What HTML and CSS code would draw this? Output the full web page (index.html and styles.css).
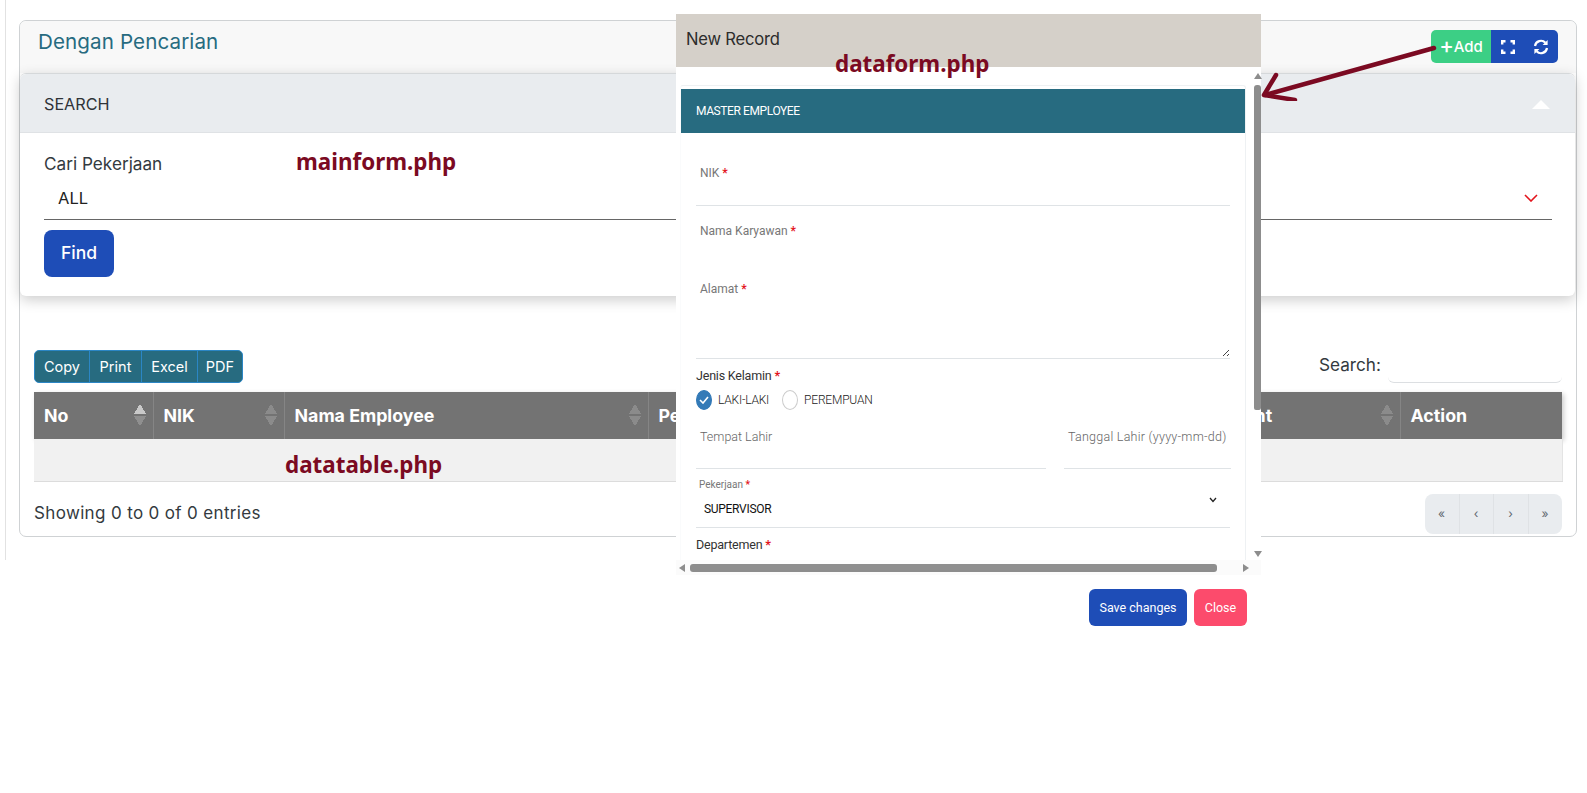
FILE: index.html
```html
<!DOCTYPE html>
<html lang="id">
<head>
<meta charset="utf-8">
<title>Dengan Pencarian</title>
<link rel="stylesheet" href="styles.css">
</head>
<body>
<div class="page">
  <section class="card">
    <header class="card-head">
      <h1 class="card-title">Dengan Pencarian</h1>
      <div class="tools">
        <button class="tool tool-add"><span class="plus">+</span>Add</button>
        <button class="tool tool-icon" aria-label="Fullscreen">
          <svg width="14" height="14" viewBox="0 0 14 14" fill="none" stroke="#fff" stroke-width="2.4"><path d="M1.2 4.5V1.2h3.3M9.5 1.2h3.3v3.3M12.8 9.5v3.3H9.5M4.5 12.8H1.2V9.5"/></svg>
        </button>
        <button class="tool tool-icon" aria-label="Refresh">
          <svg width="16" height="16" viewBox="0 0 16 16" fill="none" stroke="#fff" stroke-width="2.2"><path d="M2 7a6 6 0 0 1 10.4-3.2"/><path d="M14 9a6 6 0 0 1-10.4 3.2"/><path d="M14.6 1v5h-5z" fill="#fff" stroke="none"/><path d="M1.4 15v-5h5z" fill="#fff" stroke="none"/></svg>
        </button>
      </div>
    </header>

    <section class="search">
      <div class="search-head">
        <span>SEARCH</span>
        <span class="tri-up"></span>
      </div>
      <div class="search-body">
        <label class="search-label">Cari Pekerjaan</label>
        <div class="select">
          <span>ALL</span>
          <svg width="14" height="8" viewBox="0 0 14 8" fill="none" stroke="#e3141c" stroke-width="1.6"><path d="M1 1l6 6 6-6"/></svg>
        </div>
        <button class="find">Find</button>
      </div>
    </section>

    <div class="dt-top">
      <div class="dt-buttons">
        <button class="dt-btn b1">Copy</button>
        <button class="dt-btn b2">Print</button>
        <button class="dt-btn b3">Excel</button>
        <button class="dt-btn b4">PDF</button>
      </div>
      <div class="dt-search">
        <span>Search:</span>
        <span class="dt-input"></span>
      </div>
    </div>

    <table class="dt">
      <colgroup>
        <col class="c1"><col class="c2"><col class="c3"><col class="c4"><col class="c5"><col class="c6">
      </colgroup>
      <thead>
        <tr>
          <th><div class="th-in">No<span class="sort on"></span></div></th>
          <th><div class="th-in">NIK<span class="sort"></span></div></th>
          <th><div class="th-in">Nama Employee<span class="sort"></span></div></th>
          <th><div class="th-in">Pekerjaan<span class="sort"></span></div></th>
          <th><div class="th-in">Department<span class="sort"></span></div></th>
          <th><div class="th-in">Action</div></th>
        </tr>
      </thead>
      <tbody>
        <tr><td colspan="6"></td></tr>
      </tbody>
    </table>

    <div class="dt-bottom">
      <span class="dt-info">Showing 0 to 0 of 0 entries</span>
      <nav class="pager">
        <span>«</span><span>‹</span><span>›</span><span>»</span>
      </nav>
    </div>
  </section>
</div>

<div class="note note-main">mainform.php</div>
<div class="note note-table">datatable.php</div>

<aside class="modal">
  <div class="modal-head">New Record</div>
  <div class="modal-scroll">
    <div class="panel-wrap">
      <div class="panel">
        <div class="panel-title">MASTER EMPLOYEE</div>
        <div class="panel-body">
          <div class="field f1"><span class="lbl">NIK <b>*</b></span></div>
          <div class="field f2"><span class="lbl">Nama Karyawan <b>*</b></span></div>
          <div class="field f3"><span class="lbl">Alamat <b>*</b></span>
            <svg class="grip" width="8" height="8" viewBox="0 0 8 8" fill="none" stroke="#444" stroke-width="1"><path d="M1 7l6-6M5 7l2-2"/></svg>
          </div>
          <div class="gender">
            <span class="lbl-dark">Jenis Kelamin <b>*</b></span>
            <div class="radios">
              <span class="radio checked"><svg width="10" height="8" viewBox="0 0 10 8" fill="none" stroke="#fff" stroke-width="1.6"><path d="M1 4l3 3 5-6"/></svg></span>
              <span class="radio-txt r1">LAKI-LAKI</span>
              <span class="radio"></span>
              <span class="radio-txt">PEREMPUAN</span>
            </div>
          </div>
          <div class="two">
            <div class="field f4"><span class="lbl light">Tempat Lahir</span></div>
            <div class="field f4"><span class="lbl light wide">Tanggal Lahir (yyyy-mm-dd)</span></div>
          </div>
          <div class="field f5">
            <span class="lbl small">Pekerjaan <b>*</b></span>
            <div class="f5-val">
              <span>SUPERVISOR</span>
              <svg width="8" height="6" viewBox="0 0 8 6" fill="none" stroke="#222" stroke-width="1.3"><path d="M1 1l3 3.5L7 1"/></svg>
            </div>
          </div>
          <div class="dept"><span class="lbl-dark">Departemen <b>*</b></span></div>
        </div>
      </div>
    </div>
    <div class="vbar">
      <span class="arr-up"></span>
      <span class="vthumb"></span>
      <span class="arr-down"></span>
    </div>
  </div>
  <div class="hbar">
    <span class="arr-left"></span>
    <span class="hthumb"></span>
    <span class="arr-right"></span>
  </div>
  <div class="modal-foot">
    <button class="m-btn save">Save changes</button>
    <button class="m-btn close">Close</button>
  </div>
</aside>

<div class="note note-form">dataform.php</div>

<svg class="arrow" width="180" height="70" viewBox="0 0 180 70" fill="none" stroke="#7b0a22" stroke-width="4.5" stroke-linecap="round">
  <path d="M173 17L4 64"/>
  <path d="M15 44L3 64L34 69" stroke-linejoin="round"/>
</svg>
</body>
</html>
```

FILE: styles.css
```css
* { box-sizing: border-box; }
html, body { margin: 0; padding: 0; background: #fff; }
body {
  font-family: Inter, "Liberation Sans", sans-serif;
  color: #2a3547;
  width: 1587px;
  height: 793px;
  overflow: hidden;
  position: relative;
}
button { font-family: inherit; border: 0; cursor: pointer; }

.page {
  margin-left: 5px;
  width: 1572px;
  height: 560px;
  border-left: 1px solid #e2e2e2;
  padding: 20px 0 0 13px;
}
.card {
  width: 1558px;
  height: 517px;
  border: 1px solid #cfd2d4;
  border-radius: 7px;
  background: #fff;
}
.card-head {
  height: 52px;
  background: #f8f8f8;
  border-radius: 7px 7px 0 0;
  display: flex;
  justify-content: space-between;
  padding: 9px 18px 0 18px;
}
.card-title {
  margin: 0;
  font-size: 20.6px;
  line-height: 24px;
  font-weight: 400;
  letter-spacing: .1px;
  color: #276b80;
}
.tools { display: flex; height: 33px; }
.tool { color: #fff; height: 33px; padding: 0; display: flex; align-items: center; justify-content: center; }
.tool-add {
  width: 60px;
  background: #3ccf85;
  border-radius: 5px 0 0 5px;
  font-size: 15px;
  font-weight: 500;
}
.plus { font-size: 22px; line-height: 22px; font-weight: 500; margin-top: -4px; }
.tool-icon { width: 33.5px; background: #1e4db7; }
.tool-icon:last-child { border-radius: 0 5px 5px 0; }

.search {
  width: 1555px;
  height: 223px;
  margin-top: 0;
  border-top: 1px solid #d5d8da;
  border-radius: 6px;
  background: #fff;
  box-shadow: 0 4px 14px rgba(0,0,0,.2);
}
.search-head {
  height: 59px;
  background: #e9ecef;
  border-bottom: 1px solid #dfe2e5;
  border-radius: 6px 6px 0 0;
  display: flex;
  align-items: center;
  justify-content: space-between;
  padding: 2px 25px 0 24px;
  font-size: 16.2px;
  color: #2f3338;
}
.tri-up {
  width: 0;
  height: 0;
  border-left: 9px solid transparent;
  border-right: 9px solid transparent;
  border-bottom: 9px solid #fff;
}
.search-body { padding: 20px 23px 0 24px; }
.search-label { display: block; font-size: 17.2px; line-height: 22px; color: #333a40; }
.select {
  height: 44px;
  margin-top: 1px;
  border-bottom: 1px solid #666;
  display: flex;
  align-items: center;
  justify-content: space-between;
  padding: 0 14px 0 14px;
  font-size: 16.5px;
  color: #222;
}
.find {
  display: block;
  margin-top: 10px;
  width: 70px;
  height: 47px;
  padding: 0 0 2px;
  border-radius: 8px;
  background: #1e4db7;
  color: #fff;
  font-size: 17.5px;
  font-weight: 500;
}

.dt-top {
  height: 96px;
  padding: 54px 14px 0 14px;
  display: flex;
  justify-content: space-between;
}
.dt-buttons {
  display: flex;
  height: 33px;
  width: 209px;
  border: 1px solid #2b86c5;
  border-radius: 5px;
  background: #276b80;
  overflow: hidden;
}
.dt-btn {
  background: transparent;
  color: #fff;
  font-size: 14.5px;
  padding: 0;
  border-right: 1px solid #2b86c5;
}
.b1 { width: 55px; }
.b2 { width: 52px; }
.b3 { width: 56px; }
.b4 { flex: 1; border-right: 0; }
.dt-search {
  display: flex;
  height: 33px;
  font-size: 17.2px;
  color: #333a40;
  line-height: 30px;
}
.dt-input {
  display: block;
  width: 174px;
  margin-left: 7px;
  border-bottom: 1px solid #dcdfe2;
  border-radius: 0 0 6px 6px;
}

.dt {
  width: 1528px;
  margin-left: 14px;
  border-collapse: collapse;
  table-layout: fixed;
}
.c1 { width: 119px; }
.c2 { width: 131px; }
.c3 { width: 364px; }
.c4 { width: 510px; }
.c5 { width: 242px; }
.c6 { width: 162px; }
.dt th {
  height: 47px;
  padding: 0 7px 1px 10px;
  background: #737373;
  color: #fff;
  text-align: left;
  font-size: 17.8px;
  font-weight: 700;
  border-left: 1px solid #858585;
}
.dt th:first-child { border-left: 0; }
.dt thead { box-shadow: 2px 2px 5px rgba(0,0,0,.2); }
.th-in { display: flex; align-items: center; justify-content: space-between; }
.sort {
  width: 12px;
  height: 22px;
  opacity: .45;
  background:
    linear-gradient(to top left, #aaa 50%, transparent 50.5%) 0 0 / 6px 10px no-repeat,
    linear-gradient(to top right, #aaa 50%, transparent 50.5%) 6px 0 / 6px 10px no-repeat,
    linear-gradient(to bottom left, #aaa 50%, transparent 50.5%) 0 12px / 6px 10px no-repeat,
    linear-gradient(to bottom right, #aaa 50%, transparent 50.5%) 6px 12px / 6px 10px no-repeat;
}
.sort.on {
  opacity: 1;
  background:
    linear-gradient(to top left, #c9c9c9 50%, transparent 50.5%) 0 0 / 6px 10px no-repeat,
    linear-gradient(to top right, #c9c9c9 50%, transparent 50.5%) 6px 0 / 6px 10px no-repeat,
    linear-gradient(to bottom left, #8f8f8f 50%, transparent 50.5%) 0 12px / 6px 10px no-repeat,
    linear-gradient(to bottom right, #8f8f8f 50%, transparent 50.5%) 6px 12px / 6px 10px no-repeat;
}
.dt td {
  height: 42px;
  background: #f1f1f1;
  border-bottom: 1px solid #dcdcdc;
  border-right: 1px solid #e4e4e4;
}

.dt-bottom {
  margin: 12px 14px 0 14px;
  display: flex;
  align-items: center;
  justify-content: space-between;
  height: 40px;
  font-size: 17px;
  letter-spacing: .35px;
  color: #333a40;
}
.dt-info { padding-bottom: 2px; }
.pager {
  display: flex;
  width: 137px;
  height: 40px;
  background: #e9ecef;
  border-radius: 8px;
  font-size: 12px;
  color: #5f6870;
}
.pager span {
  flex: 1;
  display: flex;
  align-items: center;
  justify-content: center;
  border-left: 1px solid #dfe2e5;
}
.pager span:first-child { border-left: 0; }

.note {
  position: absolute;
  font-family: "Noto Sans", "Open Sans", sans-serif;
  font-weight: 700;
  font-size: 22.4px;
  line-height: 30px;
  color: #7b0a22;
}
.note-main { left: 296px; top: 147px; }
.note-table { left: 285px; top: 450px; }
.note-form { left: 835px; top: 49px; }

.modal {
  position: absolute;
  left: 676px;
  top: 14px;
  width: 585px;
  height: 626px;
  background: #fff;
  font-family: Roboto, "Liberation Sans", sans-serif;
}
.modal-head {
  height: 53px;
  background: #d5d0c9;
  padding: 12px 10px 0;
  font-size: 16.6px;
  line-height: 26px;
  letter-spacing: -.2px;
  color: #2c2c2c;
  font-family: Inter, sans-serif;
}
.modal-scroll {
  height: 493px;
  display: grid;
  grid-template-columns: 1fr 7px;
}
.panel-wrap { padding: 18px 8px 0 4px; overflow: hidden; }
.panel {
  height: 475px;
  border: 1px solid #eef1f3;
  border-left-color: #fafbfc;
  border-bottom: 0;
  border-radius: 3px 3px 0 0;
  padding-top: 3px;
  overflow: hidden;
}
.panel-title {
  height: 44px;
  margin: 0 -1px;
  padding: 0 16px;
  background: #276b80;
  color: #fff;
  font-size: 12px;
  font-weight: 400;
  line-height: 44px;
  letter-spacing: -.4px;
}
.panel-body { padding: 0 15px; font-size: 12px; }
.panel-body b { color: #e3141c; font-weight: 700; }
.field { position: relative; padding-left: 4px; }
.lbl { display: block; line-height: 14px; color: #777; font-weight: 400; }
.lbl.light { font-weight: 300; font-size: 12.5px; color: #666; }
.lbl.wide { letter-spacing: .25px; }
.lbl.small { font-size: 10px; line-height: 12px; color: #777; }
.f1 { height: 73px; padding-top: 33px; border-bottom: 1px solid #dfe3e6; }
.f2 { height: 58px; padding-top: 18px; }
.f3 { height: 95px; padding-top: 18px; border-bottom: 1px solid #dfe3e6; }
.grip { position: absolute; right: 0; bottom: 1px; }
.gender { padding-top: 10px; height: 51px; }
.lbl-dark { display: block; line-height: 14px; font-size: 12.5px; letter-spacing: -.2px; color: #333; }
.radios { margin-top: 7px; display: flex; align-items: center; height: 20px; }
.radio {
  width: 16px;
  height: 20px;
  border: 1px solid #ccc;
  border-radius: 50%;
  display: flex;
  align-items: center;
  justify-content: center;
}
.radio.checked { background: #337ab7; border-color: #337ab7; }
.radio-txt { margin-left: 6px; font-size: 12px; font-weight: 300; letter-spacing: -.2px; color: #222; }
.radio-txt.r1 { margin-right: 13px; }
.two { display: grid; grid-template-columns: 350px 167px; column-gap: 18px; }
.f4 { height: 59px; padding-top: 20px; border-bottom: 1px solid #dfe3e6; }
.f5 { height: 59px; padding: 10px 0 0 3px; border-bottom: 1px solid #dfe3e6; }
.f5-val {
  margin-top: 10px;
  display: flex;
  justify-content: space-between;
  padding: 0 13px 0 5px;
  font-size: 12px;
  line-height: 16px;
  letter-spacing: -.3px;
  color: #111;
}
.f5-val svg { margin-top: -4px; }
.dept { padding-top: 10px; }

.vbar { display: flex; flex-direction: column; align-items: center; padding-top: 6px; height: 493px; }
.vthumb { width: 7px; height: 325px; margin-top: 6px; flex: none; background: #8d8d8d; border-radius: 3px 3px 2px 2px; }
.arr-up, .arr-down { width: 0; height: 0; border-left: 4px solid transparent; border-right: 4px solid transparent; flex: none; }
.arr-up { border-bottom: 6px solid #8d8d8d; }
.arr-down { border-top: 6px solid #8d8d8d; margin-top: 141px; }

.hbar {
  height: 15px;
  background: #fbfbfb;
  display: flex;
  align-items: center;
  padding: 0 0 0 3px;
}
.hthumb { width: 527px; height: 8px; margin-left: 5px; background: #8d8d8d; border-radius: 3px; }
.arr-left, .arr-right { width: 0; height: 0; border-top: 4px solid transparent; border-bottom: 4px solid transparent; }
.arr-left { border-right: 6px solid #8d8d8d; }
.arr-right { border-left: 6px solid #8d8d8d; margin-left: 26px; }

.modal-foot {
  display: flex;
  justify-content: flex-end;
  gap: 7px;
  padding: 14px 14px 0 0;
}
.m-btn { height: 37px; border-radius: 6px; color: #fff; font-family: Roboto, sans-serif; font-size: 12.5px; padding: 0; }
.save { width: 98px; background: #1e4db7; }
.close { width: 53px; background: #fc4b6c; }

.arrow { position: absolute; left: 1261px; top: 31px; pointer-events: none; }
```
